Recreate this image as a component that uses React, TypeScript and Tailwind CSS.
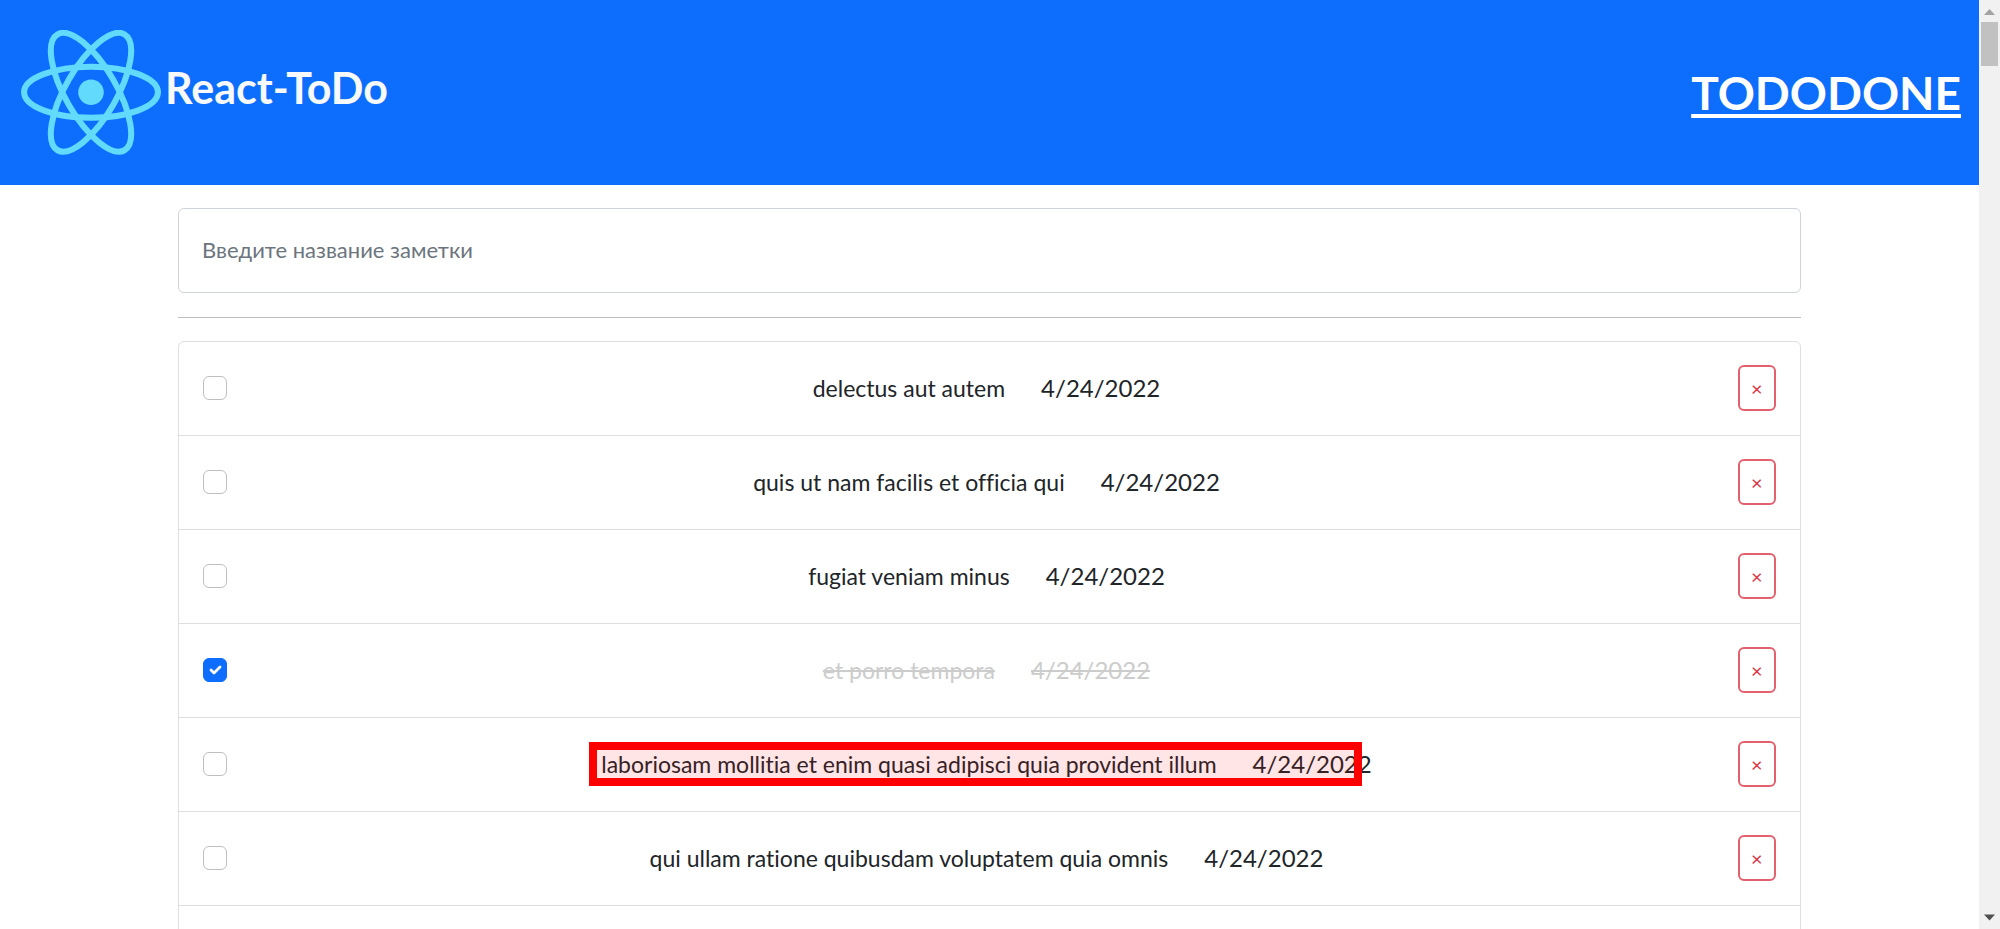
import { useState } from "react";

type Todo = {
  id: number;
  title: string;
  date: string;
  done: boolean;
  marked?: boolean;
};

const initialTodos: Todo[] = [
  { id: 1, title: "delectus aut autem", date: "4/24/2022", done: false },
  { id: 2, title: "quis ut nam facilis et officia qui", date: "4/24/2022", done: false },
  { id: 3, title: "fugiat veniam minus", date: "4/24/2022", done: false },
  { id: 4, title: "et porro tempora", date: "4/24/2022", done: true },
  {
    id: 5,
    title: "laboriosam mollitia et enim quasi adipisci quia provident illum",
    date: "4/24/2022",
    done: false,
    marked: true,
  },
  { id: 6, title: "qui ullam ratione quibusdam voluptatem quia omnis", date: "4/24/2022", done: false },
];

function ReactLogo() {
  return (
    <svg viewBox="-11.5 -10.23 23 20.46" className="w-[140px] shrink-0" aria-hidden="true">
      <circle r="2.1" fill="#61dafb" />
      <g stroke="#61dafb" strokeWidth="1" fill="none">
        <ellipse rx="11" ry="4.2" />
        <ellipse rx="11" ry="4.2" transform="rotate(60)" />
        <ellipse rx="11" ry="4.2" transform="rotate(120)" />
      </g>
    </svg>
  );
}

function Header() {
  return (
    <header className="flex h-[185px] items-center justify-between bg-[#0d6efd] pr-[18px] pl-[21px]">
      <div className="flex items-center">
        <ReactLogo />
        <span className="pb-2.5 pl-1 text-[43px] leading-[60px] font-bold text-[#f8f9fa]">React-ToDo</span>
      </div>
      <a href="#" className="text-[46px] leading-[60px] font-bold text-white underline decoration-4 underline-offset-4">
        TODODONE
      </a>
    </header>
  );
}

function TodoRow({ todo, onToggle, onRemove }: { todo: Todo; onToggle: () => void; onRemove: () => void }) {
  const inputId = `todo-${todo.id}`;
  return (
    <li className="flex items-center justify-between border-b border-[#dfdfdf] px-6 pt-[23px] pb-6">
      <span className="relative flex size-6">
        <input
          id={inputId}
          type="checkbox"
          checked={todo.done}
          onChange={onToggle}
          className="size-6 appearance-none rounded-md border border-[#bfbfbf] bg-white checked:border-[#0d6efd] checked:bg-[#0d6efd]"
        />
        {todo.done && (
          <svg viewBox="0 0 24 24" className="pointer-events-none absolute inset-0 size-6" fill="none" aria-hidden="true">
            <path d="m8 12 3 3 6-6" stroke="#fff" strokeWidth="2.8" strokeLinecap="round" strokeLinejoin="round" />
          </svg>
        )}
      </span>
      <label
        htmlFor={inputId}
        className={
          todo.done
            ? "relative ml-2 flex gap-9 whitespace-nowrap text-[#cccccc] line-through"
            : "relative ml-2 flex gap-9 whitespace-nowrap text-[#212529]"
        }
      >
        <span className="text-[23px] [font-variant-ligatures:none]">{todo.title}</span>
        <span className="text-[24px]">{todo.date}</span>
        {todo.marked && (
          <span className="absolute -inset-y-1 -left-3 right-2.5 border-8 border-[#ff0000] bg-[#ff0000]/10" />
        )}
      </label>
      <button
        type="button"
        aria-label="Удалить"
        onClick={onRemove}
        className="flex h-[46px] w-[38px] items-center justify-center rounded-md border-2 border-[#e4606d] text-[20px] text-[#dc3545]"
      >
        ×
      </button>
    </li>
  );
}

function ScrollRail() {
  return (
    <div className="flex w-[21px] shrink-0 flex-col items-center bg-[#f1f1f1]" aria-hidden="true">
      <svg viewBox="0 0 21 22" className="w-full shrink-0">
        <path d="M5 15 10.500 9 16 15z" fill="#a3a3a3" />
      </svg>
      <div className="h-11 w-[17px] bg-[#c1c1c1]" />
      <div className="grow" />
      <svg viewBox="0 0 21 22" className="w-full shrink-0">
        <path d="M5 7.500 10.500 13.500 16 7.500z" fill="#505050" />
      </svg>
    </div>
  );
}

export default function App() {
  const [todos, setTodos] = useState(initialTodos);
  const [draft, setDraft] = useState("");

  const toggle = (id: number) => setTodos(todos.map((t) => (t.id === id ? { ...t, done: !t.done } : t)));
  const remove = (id: number) => setTodos(todos.filter((t) => t.id !== id));

  return (
    <div className="flex h-screen overflow-hidden bg-white font-[Lato,sans-serif] text-[24px] leading-9 text-[#212529]">
      <div className="min-w-0 grow overflow-hidden">
        <Header />
        <main className="mx-auto w-[82%] pt-[23px]">
          <input
            type="text"
            aria-label="Введите название заметки"
            placeholder="Введите название заметки"
            value={draft}
            onChange={(e) => setDraft(e.target.value)}
            className="block h-[85px] w-full rounded-md border border-[#ced4da] px-[23px] pb-0.5 text-[22px] placeholder:text-[#6c757d]"
          />
          <hr className="mt-6 mb-[23px] border-[#bcbebf]" />
          <ul className="rounded-t-md border border-[#dfdfdf]">
            {todos.map((todo) => (
              <TodoRow key={todo.id} todo={todo} onToggle={() => toggle(todo.id)} onRemove={() => remove(todo.id)} />
            ))}
            <li className="h-[94px]" />
          </ul>
        </main>
      </div>
      <ScrollRail />
    </div>
  );
}
